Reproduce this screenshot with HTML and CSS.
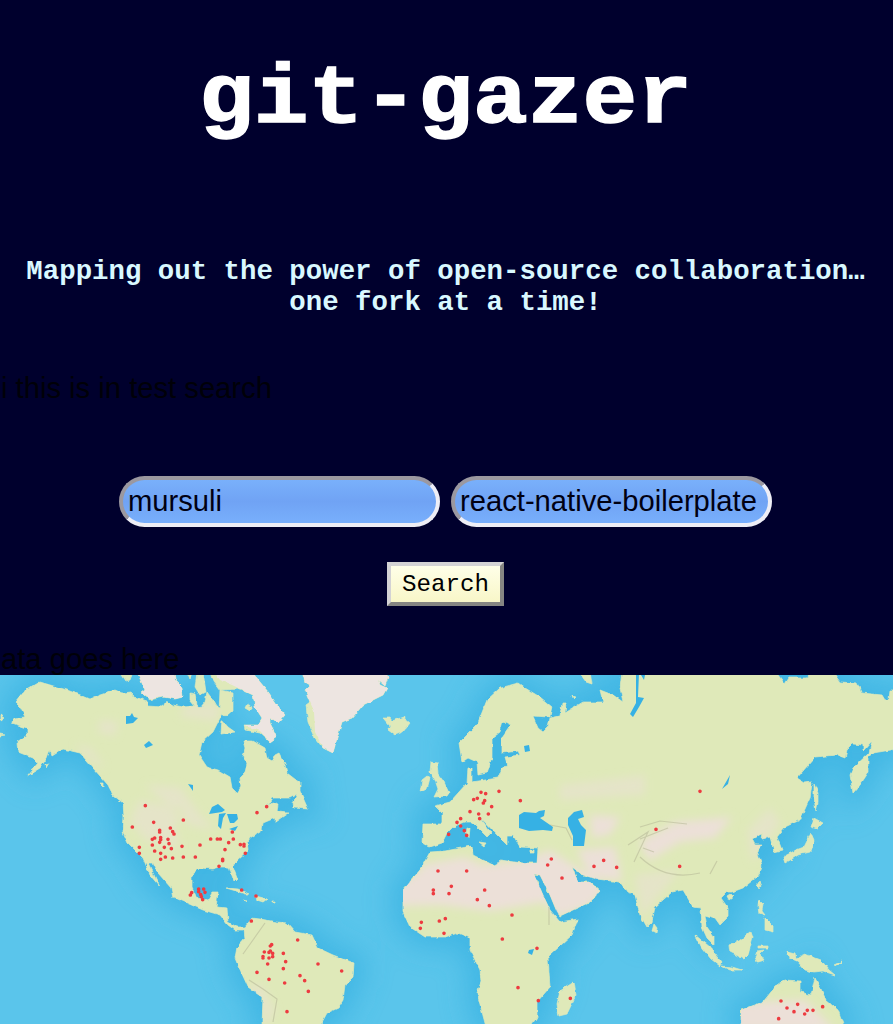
FILE: index.html
```html
<!DOCTYPE html>
<html lang="en">
<head>
<meta charset="utf-8">
<title>git-gazer</title>
<link rel="stylesheet" href="styles.css">
</head>
<body>
<header class="header">
  <h1 class="title">git-gazer</h1>
  <h2 class="tagline">Mapping out the power of open-source collaboration…<br>one fork at a time!</h2>
</header>
<main>
  <div class="note">i this is in test search</div>
  <form class="search">
    <div class="fields">
      <input class="field" type="text" value="mursuli" aria-label="Owner">
      <input class="field" type="text" value="react-native-boilerplate" aria-label="Repository">
    </div>
    <button class="submit" type="button">Search</button>
  </form>
  <div class="note note-data">ata goes here</div>
  <svg class="map" viewBox="0 675 893 349" role="img" aria-label="World map of forks">
    <defs>
      <filter id="rough" x="-5%" y="-5%" width="110%" height="110%" color-interpolation-filters="sRGB"><feTurbulence type="fractalNoise" baseFrequency=".2" numOctaves="1" seed="4"/><feDisplacementMap in="SourceGraphic" scale="4" xChannelSelector="R" yChannelSelector="G"/></filter>
      <filter id="soft" x="-20%" y="-20%" width="140%" height="140%"><feGaussianBlur stdDeviation="14"/></filter>
      <filter id="haze" x="-30%" y="-30%" width="160%" height="160%"><feGaussianBlur stdDeviation="4"/></filter>
      <g id="continents">
        <path id="americas" d="M40 682 67 690 83 696 90 699 100 695 115 690 122 693 130 692 135 697 147 701 147 706 163 707 166 701 173 705 183 707 195 706 190 700 190 693 195 694 197 705 200 708 205 702 207 692 213 700 217 707 223 710 220 718 213 732 202 742 199 755 207 767 218 770 230 777 232 788 237 793 241 787 240 778 245 773 247 763 243 757 245 748 243 741 253 741 265 748 267 758 272 761 275 755 279 753 285 765 287 773 300 783 300 791 308 809 294 808 293 803 297 794 290 798 273 798 267 807 272 802 278 804 277 812 288 813 275 822 275 818 263 823 262 830 250 838 247 843 248 850 235 862 233 867 237 878 234 881 231 873 229 867 220 867 213 869 200 868 192 875 192 888 197 898 208 900 212 893 218 893 216 907 227 908 228 922 237 927 245 927 252 918 260 919 277 922 287 923 295 932 312 935 318 948 333 955 354 963 353 977 345 985 343 1000 338 1008 327 1013 320 1026 262 1026 263 998 248 987 237 963 235 958 237 947 245 938 244 930 235 930 228 925 220 915 203 910 173 897 171 888 158 873 153 863 148 863 160 887 150 875 143 858 137 852 128 843 123 832 124 817 123 803 113 795 108 785 93 768 80 753 63 749 52 756 50 750 47 758 40 768 27 776 38 763 33 758 18 752 17 742 27 735 27 728 12 723 13 718 25 717 20 707 15 702 23 692Z"/>
        <path id="oldworld" d="M518 683 525 688 540 697 552 707 550 717 533 716 538 728 543 732 548 727 550 718 560 716 562 703 566 703 565 713 583 702 603 702 600 690 613 695 623 702 620 688 622 672H778V675L785 684 789 678 807 678 808 672H835V675L840 682 857 683 862 693 882 695 885 700 889 699 890 691H897V749L873 753 868 757 868 773 860 785 853 793 850 775 853 768 869 753 872 741 863 751 863 745 853 744 847 750 845 758 837 755 815 757 797 778 805 783 812 782 810 798 800 820 785 827 777 837 782 850 774 852 770 837 762 839 763 833 752 839 755 845 762 845 757 851 762 865 760 873 757 877 743 888 732 892 727 892 721 898 728 908 728 917 720 925 715 918 705 915 707 927 714 937 714 945 707 938 702 927 701 908 693 907 683 890 672 892 655 907 652 922 647 927 640 915 635 895 627 892 620 882 597 879 583 875 572 867 578 882 590 882 600 891 590 902 560 916 557 912 550 895 540 875 534 874 543 895 550 910 560 922 578 919 572 935 548 957 550 987 537 1002 537 1017 530 1027 486 1027 477 993 481 982 480 970 470 950 470 938 458 933 445 937 425 937 410 927 403 912 403 890 420 870 430 852 445 851 472 846 473 855 495 866 500 860 522 863 537 863 538 848 520 847 513 835 507 835 507 845 497 835 480 817 491 833 487 837 472 822 465 822 453 827 447 833 442 843 430 847 422 843 423 824 442 824 442 813 435 806 450 802 467 783 468 768 472 768 472 782 498 778 502 768 508 767 505 757 520 755 518 751 502 753 502 738 511 725 503 721 500 732 492 738 492 758 487 773 478 775 477 762 468 758 462 762 459 743 477 725 487 700 500 688Z"/>
        <path id="australia" d="M741 1026 741 1010 763 1002 775 987 785 980 800 981 800 992 811 995 815 978 821 989 826 1000 838 1010 844 1026Z"/>
      </g>
      <g id="islands">
        <path d="M137 672 145 690 141 693 150 700 163 697 175 699 183 697 182 687 175 680 174 672ZM120 672H133L130 680 126 681ZM187 672H193L190 679ZM197 672H203L206 692 200 695 195 687ZM211 672 214 682 220 690 240 689 253 695 255 707 262 718 258 725 244 725 245 730 260 733 270 742 277 737 270 723 270 717 278 723 285 715 277 705 269 693 260 682 252 672ZM220 690 233 693 233 710 225 717 219 712ZM222 720 228 727 235 732 221 734ZM247 704 253 707 250 711 245 708ZM302 672 305 682 310 685 305 690 310 702 306 705 308 722 315 738 323 748 333 753 336 742 342 722 352 718 363 705 383 695 387 688 380 685 378 680 385 686 388 678 385 672Z"/>
        <path d="M383 718 390 718 392 721 403 717 410 723 403 732 395 735 388 730 390 726ZM431 762 437 763 438 774 444 782 449 793 447 796 434 797 438 789 435 780 430 772ZM427 776 430 778 427 789 420 792 422 780ZM579 672H590L592 684 586 682ZM467 827 470 828 469 838 466 836ZM479 842 486 843 484 846ZM530 850H534V853H530ZM574 982 576 995 567 1014 559 1016 557 1004 560 991ZM654 924 657 928 656 933 652 931Z"/>
        <path d="M814 784 818 793 818 803 816 812 814 798ZM814 818 823 823 817 829 811 827ZM811 833 814 840 810 852 798 855 792 859 785 863 783 857 796 850 804 847ZM759 882 761 886 759 889 757 885ZM730 894 733 897 729 900 727 896ZM759 900 763 904 762 911 765 915 759 913 758 906ZM765 918 773 926 773 932 765 930ZM695 935 710 947 721 962 720 966 711 959 702 948ZM751 931 753 937 748 955 744 959 730 952 729 945 739 941ZM721 966 732 967 742 970 730 970ZM757 946H768V948H757ZM757 951 764 950 760 954 764 960 757 962 755 957ZM787 951 795 953 796 958 805 954 821 960 829 970 835 975 823 971 814 972 805 970 797 961 789 958ZM834 965 842 961 837 966ZM226 888 238 889 249 894 245 894 236 891ZM256 896 267 899 263 902 257 900ZM243 900 247 901 244 902ZM272 901H275V902H272ZM45 764 49 763 46 768ZM100 783 103 783 103 786ZM0 715 4 718 0 721ZM0 734 5 735 0 736ZM572 696 575 697 573 699Z"/>
      </g>
      <clipPath id="onland"><use href="#americas"/><use href="#oldworld"/><use href="#australia"/></clipPath>
    </defs>
    <rect class="sea" y="675" width="893" height="349"/>
    <g class="shallows" filter="url(#soft)"><use href="#continents"/></g>
    <g filter="url(#rough)">
      <use class="land" href="#continents"/>
      <use class="land" href="#islands"/>
      <path class="ice" d="M302 672 305 682 310 685 305 690 310 702 314 711 315 732 323 748 333 753 336 742 342 722 352 718 363 705 383 695 387 688 380 685 378 680 385 686 388 678 385 672ZM137 672 145 690 141 693 150 699 163 697 175 699 183 697 182 687 175 680 174 672ZM214 672 220 680 232 685 253 695 255 707 262 718 258 725 244 725 260 731 270 742 277 737 270 723 270 717 278 723 285 715 277 705 269 693 260 682 252 672Z"/>
    </g>
    <g clip-path="url(#onland)">
      <g class="desert" filter="url(#haze)">
        <path d="M395 886 415 874 425 864 465 857 482 865 522 861 550 850 605 886 592 905 559 917 545 902 490 911 440 905 395 906ZM640 842 675 822 732 817 715 838 680 842 649 861ZM577 850 615 847 622 881 590 877ZM590 815 620 817 610 835 592 838ZM735 1003 805 1000 835 1030 735 1030Z"/>
        <path class="faint" d="M185 706 220 705 217 721 180 716ZM145 785 180 787 200 815 215 830 190 825ZM185 810 140 800 130 820 145 840 180 848 174 826ZM75 744 90 748 105 768 93 762ZM247 985 262 985 275 1010 267 1028 259 1010ZM100 720 118 722 115 736 98 732ZM560 785 645 775 645 795 560 800ZM748 830 770 808 780 823 752 862ZM635 875 680 870 655 900 642 918Z"/>
      </g>
      <path class="ridge" d="M640 857C658 874 679 878 700 873M640 827 660 821 687 824M640 839 668 828M628 845 648 832 634 862M550 825 566 828 572 840M265 923 253 940 243 954M249 980 263 989 277 999 273 1022M710 874 717 861M549 907 549 925M643 848 654 852"/>
    </g>
    <path class="lake" d="M519 815 524 812 536 813 539 811 545 810 544 816 540 818 553 827 552 831 543 830 529 831 519 828ZM568 818 574 812 582 810 584 817 578 819 581 825 586 830 584 846 573 846 573 836 568 825ZM730 775 728 784 722 789ZM524 746 529 745 530 751 525 752ZM126 716 130 716 132 713 134 717 138 718 133 723 126 724ZM144 745 149 741 153 745 146 748ZM188 784 193 785 193 791ZM209 814 212 807 218 804 225 810 222 812ZM219 814 226 813 223 818 221 829 218 826ZM227 814 237 814 238 819 234 823 230 823ZM229 829 238 826 235 831ZM529 950 534 949 532 955 528 953ZM641 675 645 675 644 680ZM636 673 639 673 638 697 644 698 639 707 633 717 630 714 636 703Z"/>
    <g class="dots">
      <path transform="translate(100 800) scale(.33333)" d="M136 17h0M97 81h0M161 67h0M250 60h0M179 91h0M179 96h0M211 84h0M218 95h0M222 102h0M157 118h0M164 114h0M182 113h0M182 119h0M179 127h0M204 118h0M118 142h0M118 160h0M157 135h0M164 153h0M193 142h0M207 131h0M214 146h0M182 160h0M182 178h0M196 171h0M218 174h0M246 139h0M250 171h0M286 171h0M300 135h0M332 117h0M352 117h0M361 117h0M386 128h0M397 96h0M400 117h0M421 134h0M432 133h0M432 138h0M436 160h0M375 149h0M368 178h0M368 182h0M357 199h0M471 38h0M500 20h0M271 285h0M275 278h0M296 267h0M296 275h0M311 267h0M315 277h0M302 284h0M304 290h0M308 299h0M425 270h0M468 288h0M454 363h0M593 420h0M515 434h0M511 438h0M511 453h0M507 457h0M493 456h0M489 470h0M489 474h0M518 460h0M518 470h0M507 474h0M503 492h0M550 460h0M557 485h0M550 506h0M471 517h0M507 538h0M554 549h0M600 527h0M614 542h0M625 574h0M654 492h0M725 513h0M561 635h0"/>
      <path transform="translate(400 675) scale(.33333)" d="M243 352h0M257 356h0M297 349h0M221 374h0M232 370h0M254 377h0M250 384h0M275 395h0M210 410h0M236 417h0M265 417h0M239 431h0M182 431h0M171 442h0M182 453h0M193 467h0M200 481h0M146 478h0M361 377h0M454 552h0M443 570h0M582 574h0M611 556h0M650 577h0M114 588h0M200 588h0"/>
      <path transform="translate(390 820) scale(.33333)" d="M516 174h0M130 210h0M130 221h0M184 199h0M177 221h0M284 210h0M262 239h0M298 257h0M366 285h0M94 307h0M91 325h0M148 303h0M166 296h0M162 340h0M337 357h0M441 385h0M384 503h0M445 542h0M541 535h0"/>
      <path transform="translate(640 675) scale(.33333)" d="M180 349h0M48 463h0M119 574h0M423 978h0M441 999h0M473 988h0M462 1010h0M494 1017h0M502 1006h0M519 1006h0M548 995h0M416 1031h0"/>
    </g>
  </svg>
</main>
</body>
</html>
```

FILE: styles.css
```css
* { box-sizing: border-box; }
body {
  margin: 0;
  height: 1024px;
  overflow: hidden;
  background: #00002d;
  color: #000;
  font-family: Helvetica, "Liberation Sans", Arial, sans-serif;
}
.header { height: 370px; padding: 43px 2px 0 0; text-align: center; font-family: "Courier New", "Liberation Mono", monospace; }
.title { margin: 0; color: #fff; font-size: 91.3px; line-height: 110px; font-weight: 700; -webkit-text-stroke: 1.5px #fff; transform: scaleY(.92); transform-origin: 0 80px; }
.tagline { margin: 103px 0 0; color: #d9f8ff; font-size: 27.4px; line-height: 31px; font-weight: 700; white-space: nowrap; }
.note { height: 36px; padding-left: 1px; color: #000008; font-size: 29.2px; line-height: 36px; white-space: nowrap; }
.search { height: 235px; padding-top: 70px; display: flex; flex-direction: column; align-items: center; gap: 35px; }
.fields { display: flex; gap: 11px; margin-right: 2px; }
.field {
  width: 321px;
  height: 51px;
  padding: 0 5px;
  border: 4px solid;
  border-color: #9b98a0 #eeeef6 #eeeef6 #9b98a0;
  border-radius: 26px;
  background: linear-gradient(#79b0fb, #70a3f4 50%, #78affc);
  color: #000012;
  font: 29.2px Helvetica, "Liberation Sans", Arial, sans-serif;
}
.submit {
  width: 117px;
  height: 44px;
  margin-right: 2px;
  padding: 0;
  border: 4px solid;
  border-color: #d3d2d4 #858582 #858582 #d3d2d4;
  background: linear-gradient(#ffffe8, #f8f6c8);
  color: #000;
  font: 24.2px "Courier New", "Liberation Mono", monospace;
}
.note-data { height: 34px; }
.map { display: block; width: 893px; height: 349px; }
.sea { fill: #5ac5eb; }
.shallows { fill: #2caae0; stroke: #30addf; stroke-width: 22; opacity: .6; }
.land { fill: #dfe9b9; stroke: #dfe9b9; stroke-width: .7; }
.ice { fill: #ede5e1; }
.desert { fill: #ece0d8; }
.faint { opacity: .5; }
.ridge { fill: none; stroke: #b5b795; stroke-width: 1.2; opacity: .55; }
.lake { fill: #36b1e4; }
.dots { fill: none; stroke: #ed3b40; stroke-width: 11; stroke-linecap: round; }
```
